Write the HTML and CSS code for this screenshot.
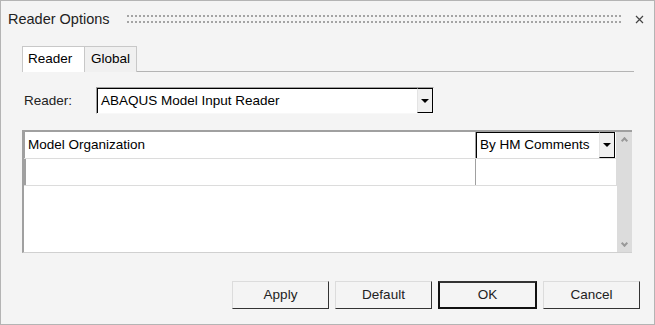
FILE: index.html
```html
<!DOCTYPE html>
<html>
  <head>
    <meta charset="utf-8" />
    <title>Reader Options</title>
    <link rel="stylesheet" href="styles.css">
  </head>
  <body>
    <div class="dialog">
      <div class="titlebar">
        <span class="title">Reader Options</span>
        <div class="grip"></div>
        <svg class="close" width="9" height="9" viewBox="0 0 9 9">
          <path d="M1 1 L8 8 M8 1 L1 8" stroke="#444" stroke-width="1.2" fill="none" />
        </svg>
      </div>

      <div class="tabs">
        <span class="tab active">Reader</span>
        <span class="tab">Global</span>
      </div>

      <div class="reader-row">
        <span class="label">Reader:</span>
        <div class="combo">
          <span class="combo-text">ABAQUS Model Input Reader</span>
          <span class="combo-btn"><i class="arrow"></i></span>
        </div>
      </div>

      <div class="grid">
        <div class="grid-body">
          <div class="row">
            <div class="cell name">Model Organization</div>
            <div class="cell value">
              <div class="combo small">
                <span class="combo-text">By HM Comments</span>
                <span class="combo-btn"><i class="arrow"></i></span>
              </div>
            </div>
          </div>
          <div class="row">
            <div class="cell name empty"></div>
            <div class="cell value"></div>
          </div>
        </div>
        <div class="scrollbar">
          <span class="chev up"></span>
          <span class="chev down"></span>
        </div>
      </div>

      <div class="buttons">
        <span class="btn">Apply</span>
        <span class="btn">Default</span>
        <span class="btn default">OK</span>
        <span class="btn">Cancel</span>
      </div>
    </div>
  </body>
</html>
```

FILE: styles.css
```css
* {
  margin: 0;
  padding: 0;
  box-sizing: border-box;
}
body {
  font-family: "Liberation Sans", Arial, sans-serif;
  font-size: 13.5px;
  color: #000;
  background: #fff;
}
.dialog {
  width: 655px;
  height: 325px;
  border: 1px solid #b4b4b4;
  background: #f4f4f4;
  display: flex;
  flex-direction: column;
}

/* title */
.titlebar {
  height: 36px;
  display: flex;
  align-items: center;
  padding: 0 10px 0 7px;
}
.title {
  font-size: 14.5px;
  color: #222;
}
.grip {
  flex: 1;
  height: 8px;
  margin: 0 13px 0 17px;
  background:
    linear-gradient(90deg, #a4a4a4 2px, transparent 2px) 0 0 / 4px 2px repeat-x,
    linear-gradient(90deg, #a4a4a4 2px, transparent 2px) 0 6px / 4px 2px repeat-x;
}
.close {
  display: block;
}

/* tabs */
.tabs {
  margin: 9px 20px 0 21px;
  height: 26px;
  display: flex;
  align-items: flex-end;
  border-bottom: 1px solid #b4b4b4;
}
.tab {
  height: 26px;
  line-height: 24px;
  padding: 0 6px;
  border: 1px solid #c8c8c8;
  border-bottom: none;
  background: #f0f0f0;
  margin-bottom: -1px;
}
.tab.active {
  background: #fff;
  height: 26px;
  padding: 0 8px 0 5px;
  width: 62px;
  border-right: none;
}

/* reader row */
.reader-row {
  margin: 15px 0 0 23px;
  display: flex;
  align-items: center;
}
.label {
  width: 72px;
  color: #222;
}
.combo {
  width: 338px;
  height: 27px;
  display: flex;
  background: #fff;
  border: 1px solid;
  border-color: #a0a0a0 #f8f8f8 #f8f8f8 #a0a0a0;
}
.combo-text {
  flex: 1;
  border-left: 1px solid #000;
  border-top: 1px solid #000;
  padding-left: 3px;
  line-height: 23px;
  white-space: nowrap;
  overflow: hidden;
}
.combo-btn {
  width: 16px;
  background: #f0f0f0;
  border-right: 1px solid #000;
  border-bottom: 1px solid #000;
  border-top: 1px solid #000;
  border-left: 1px solid #e4e4e4;
  display: flex;
  align-items: center;
  justify-content: center;
}
.arrow {
  width: 0;
  height: 0;
  border-left: 4px solid transparent;
  border-right: 4px solid transparent;
  border-top: 4px solid #000;
}

/* grid */
.grid {
  margin: 16px 22px 0 21px;
  height: 123px;
  display: flex;
  background: #fff;
  border-top: 2px solid #a0a0a0;
  border-left: 2px solid #a0a0a0;
  border-bottom: 1px solid #d0d0d0;
}
.grid-body {
  flex: 1;
}
.row {
  display: flex;
  height: 27px;
  border-bottom: 1px solid #dcdcdc;
}
.cell {
  height: 26px;
  line-height: 26px;
}
.cell.name {
  width: 452px;
  padding-left: 3px;
  border-left: 1px solid #a0a0a0;
  border-right: 1px solid #a0a0a0;
}
.cell.name.empty {
  border-left: 2px solid #a0a0a0;
}
.cell.value {
  flex: 1;
  border-right: 1px solid #dcdcdc;
}
.combo.small {
  width: 139px;
  height: 26px;
  border: none;
}
.combo.small .combo-text {
  line-height: 24px;
}
.scrollbar {
  width: 15px;
  background: #dcdcdc;
  display: flex;
  flex-direction: column;
  justify-content: space-between;
  align-items: center;
  padding: 4px 0 6px;
}
.chev {
  width: 5px;
  height: 5px;
  border-left: 2px solid #999;
  border-top: 2px solid #999;
}
.chev.up {
  transform: rotate(45deg);
  margin-top: 2px;
}
.chev.down {
  transform: rotate(225deg);
}

/* buttons */
.buttons {
  margin-top: 28px;
  display: flex;
  justify-content: flex-end;
  gap: 6px;
  padding-right: 14px;
}
.btn {
  width: 97px;
  height: 28px;
  line-height: 25px;
  text-align: center;
  background: #f4f4f4;
  border: 1px solid;
  border-color: #dcdcdc #333 #333 #dcdcdc;
  color: #222;
}
.btn.default {
  width: 99px;
  border: 2px solid #111;
  border-top-color: #333;
  line-height: 23px;
}
```
